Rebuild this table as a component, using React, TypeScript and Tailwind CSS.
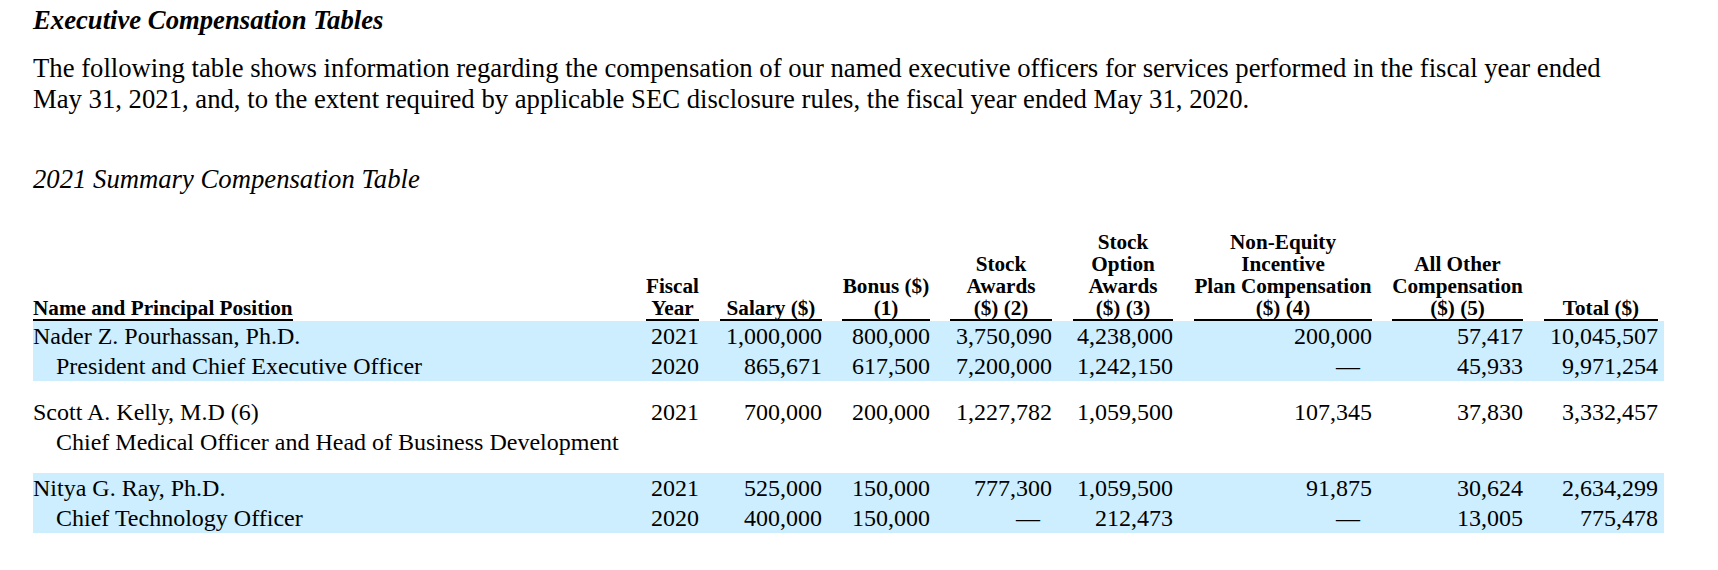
import React from "react";

type Row = {
  label: string;
  indent?: boolean;
  cells: string[];
};

type Group = Row[];

const groups: Group[] = [
  [
    {
      label: "Nader Z. Pourhassan, Ph.D.",
      cells: ["2021", "1,000,000", "800,000", "3,750,090", "4,238,000", "200,000", "57,417", "10,045,507"],
    },
    {
      label: "President and Chief Executive Officer",
      indent: true,
      cells: ["2020", "865,671", "617,500", "7,200,000", "1,242,150", "—", "45,933", "9,971,254"],
    },
  ],
  [
    {
      label: "Scott A. Kelly, M.D (6)",
      cells: ["2021", "700,000", "200,000", "1,227,782", "1,059,500", "107,345", "37,830", "3,332,457"],
    },
    {
      label: "Chief Medical Officer and Head of Business Development",
      indent: true,
      cells: ["", "", "", "", "", "", "", ""],
    },
  ],
  [
    {
      label: "Nitya G. Ray, Ph.D.",
      cells: ["2021", "525,000", "150,000", "777,300", "1,059,500", "91,875", "30,624", "2,634,299"],
    },
    {
      label: "Chief Technology Officer",
      indent: true,
      cells: ["2020", "400,000", "150,000", "—", "212,473", "—", "13,005", "775,478"],
    },
  ],
];

const headers: string[][] = [
  ["Fiscal", "Year"],
  ["Salary ($)"],
  ["Bonus ($)", "(1)"],
  ["Stock", "Awards", "($) (2)"],
  ["Stock", "Option", "Awards", "($) (3)"],
  ["Non-Equity", "Incentive", "Plan Compensation", "($) (4)"],
  ["All Other", "Compensation", "($) (5)"],
  ["Total ($)"],
];

// left padding of each numeric column (gap before its underline)
const padLeft = ["pl-[10px]", "pl-[21px]", "pl-[20px]", "pl-[20px]", "pl-[21px]", "pl-[21px]", "pl-[20px]", "pl-[21px] pr-[6px]"];

const Cell = ({ value, col }: { value: string; col: number }) => (
  <td className={`${padLeft[col]} text-right align-top`}>
    {value === "—" ? <span className="pr-3">—</span> : value}
  </td>
);

export default function App() {
  const highlighted = [true, false, true];

  return (
    <div className="min-h-[570px] bg-white pl-[33px] pt-[5px] text-black font-['Liberation_Serif','Times_New_Roman',serif]">
      <h1 className="text-[26.7px] leading-[30px] font-bold italic">Executive Compensation Tables</h1>

      <p className="mt-[18px] text-[26.7px] leading-[30.6px]">
        The following table shows information regarding the compensation of our named executive officers for services performed in the fiscal year ended
        <br />
        May 31, 2021, and, to the extent required by applicable SEC disclosure rules, the fiscal year ended May 31, 2020.
      </p>

      <h2 className="mt-[50px] text-[26.7px] leading-[30px] italic">2021 Summary Compensation Table</h2>

      <table className="mt-[37px] table-fixed w-[1631px] border-collapse">
        <colgroup>
          <col className="w-[603px]" />
          <col className="w-[63px]" />
          <col className="w-[123px]" />
          <col className="w-[108px]" />
          <col className="w-[122px]" />
          <col className="w-[121px]" />
          <col className="w-[199px]" />
          <col className="w-[151px]" />
          <col className="w-[141px]" />
        </colgroup>
        <thead>
          <tr className="text-[21.2px] leading-[22px] font-bold">
            <th className="text-left align-bottom p-0">
              <span className="inline-block border-b-2 border-black">Name and Principal Position</span>
            </th>
            {headers.map((lines, i) => (
              <th key={i} className={`${padLeft[i]} align-bottom font-bold`}>
                <div className="border-b-2 border-black text-center">
                  {lines.map((l, j) => (
                    <div key={j} className="whitespace-nowrap">
                      {l}
                    </div>
                  ))}
                </div>
              </th>
            ))}
          </tr>
        </thead>
        <tbody className="text-[24px] leading-[30px]">
          {groups.map((group, gi) => (
            <React.Fragment key={gi}>
              {gi > 0 && (
                <tr>
                  <td colSpan={9} className="h-[16px] p-0" />
                </tr>
              )}
              {group.map((row, ri) => (
                <tr key={ri} className={highlighted[gi] ? "bg-[#cceeff]" : ""}>
                  <td className={`${row.indent ? "pl-[23px]" : ""} text-left align-top whitespace-nowrap`}>
                    {row.label}
                  </td>
                  {row.cells.map((c, ci) => (
                    <Cell key={ci} value={c} col={ci} />
                  ))}
                </tr>
              ))}
            </React.Fragment>
          ))}
        </tbody>
      </table>
    </div>
  );
}
